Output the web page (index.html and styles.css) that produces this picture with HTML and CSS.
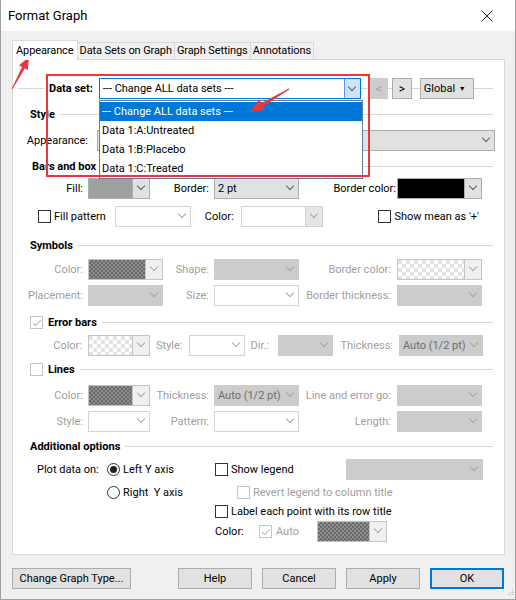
FILE: index.html
```html
<!DOCTYPE html>
<html lang="en">
  <head>
    <meta charset="UTF-8" />
    <title>Format Graph</title>
    <link rel="stylesheet" href="styles.css">
  </head>
  <body>
    <div class="titlebar">
      <span class="title">Format Graph</span>
      <svg class="close" width="12" height="12" viewBox="0 0 12 12"><path d="M0.5 0.5L11.5 11.5M11.5 0.5L0.5 11.5" stroke="#222" stroke-width="1" fill="none"/></svg>
    </div>

    <div class="tabs">
      <span class="tab active">Appearance</span>
      <span class="tab">Data Sets on Graph</span>
      <span class="tab">Graph Settings</span>
      <span class="tab">Annotations</span>
    </div>

    <div class="panel">
      <div class="row dataset">
        <b class="ds-label">Data set:</b>
        <div class="combo focus ds-combo"><span class="val">--- Change ALL data sets ---</span><i class="chev"></i></div>
        <span class="nav off">&lt;</span>
        <span class="nav next">&gt;</span>
        <span class="global">Global<span class="tri">&#9660;</span></span>
      </div>

      <div class="row head"><b>Style</b><i class="rule"></i></div>

      <div class="row">
        <span class="lbl app-lbl">Appearance:</span>
        <div class="combo app-combo"><span class="val app-val">Interleaved bars and box</span><i class="chev"></i></div>
      </div>

      <div class="row head bars-head"><b>Bars and box</b><i class="rule"></i></div>

      <div class="row fields">
        <span class="lbl c1">Fill:</span>
        <div class="c2"><div class="swatch sw62"><span class="fill gray"></span><i class="chev"></i></div></div>
        <span class="lbl c3">Border:</span>
        <div class="c4"><div class="combo"><span class="val">2 pt</span><i class="chev"></i></div></div>
        <span class="lbl c5 near">Border color:</span>
        <div class="c6"><div class="swatch"><span class="fill black"></span><i class="chev"></i></div></div>
      </div>

      <div class="row pattern">
        <span class="check"></span><span class="cap">Fill pattern</span>
        <div class="combo blank fp-combo"><span class="val"></span><i class="chev"></i></div>
        <span class="fp-color">Color:</span>
        <div class="swatch blank fp-swatch"><span class="fill"></span><i class="chev"></i></div>
        <span class="check push"></span><span class="cap">Show mean as '+'</span>
      </div>

      <div class="row head"><b>Symbols</b><i class="rule"></i></div>

      <div class="row fields dim">
        <span class="lbl c1">Color:</span>
        <div class="c2"><div class="swatch muted"><span class="fill dark-check"></span><i class="chev"></i></div></div>
        <span class="lbl c3">Shape:</span>
        <div class="c4"><div class="combo off"><span class="val"></span><i class="chev"></i></div></div>
        <span class="lbl c5">Border color:</span>
        <div class="c6"><div class="swatch muted"><span class="fill light-check"></span><i class="chev"></i></div></div>
      </div>

      <div class="row fields dim">
        <span class="lbl c1">Placement:</span>
        <div class="c2"><div class="combo off"><span class="val"></span><i class="chev"></i></div></div>
        <span class="lbl c3">Size:</span>
        <div class="c4"><div class="combo blank"><span class="val"></span><i class="chev"></i></div></div>
        <span class="lbl c5">Border thickness:</span>
        <div class="c6"><div class="combo off"><span class="val"></span><i class="chev"></i></div></div>
      </div>

      <div class="row head"><span class="check off on"></span><b>Error bars</b><i class="rule"></i></div>

      <div class="row err dim">
        <span class="lbl err-lbl">Color:</span>
        <div class="swatch muted sw62"><span class="fill light-check"></span><i class="chev"></i></div>
        <span>Style:</span>
        <div class="combo blank w56"><span class="val"></span><i class="chev"></i></div>
        <span>Dir.:</span>
        <div class="combo off w55 dir"><span class="val"></span><i class="chev"></i></div>
        <span class="push">Thickness:</span>
        <div class="combo off w84"><span class="val">Auto (1/2 pt)</span><i class="chev"></i></div>
      </div>

      <div class="row head"><span class="check off"></span><b>Lines</b><i class="rule"></i></div>

      <div class="row fields dim">
        <span class="lbl c1">Color:</span>
        <div class="c2"><div class="swatch muted sw62"><span class="fill dark-check"></span><i class="chev"></i></div></div>
        <span class="lbl c3">Thickness:</span>
        <div class="c4"><div class="combo off"><span class="val">Auto (1/2 pt)</span><i class="chev"></i></div></div>
        <span class="lbl c5">Line and error go:</span>
        <div class="c6"><div class="combo off"><span class="val"></span><i class="chev"></i></div></div>
      </div>

      <div class="row fields dim">
        <span class="lbl c1">Style:</span>
        <div class="c2"><div class="combo blank sw62"><span class="val"></span><i class="chev"></i></div></div>
        <span class="lbl c3">Pattern:</span>
        <div class="c4"><div class="combo blank"><span class="val"></span><i class="chev"></i></div></div>
        <span class="lbl c5">Length:</span>
        <div class="c6"><div class="combo off"><span class="val"></span><i class="chev"></i></div></div>
      </div>

      <div class="row head"><b>Additional options</b><i class="rule"></i></div>

      <div class="row opt">
        <span class="o1">Plot data on:</span>
        <span class="o2"><span class="radio on"></span><span class="cap">Left Y axis</span></span>
        <span class="o3"><span class="check"></span><span class="cap">Show legend</span><span class="combo off push w137"><span class="val"></span><i class="chev"></i></span></span>
      </div>

      <div class="row opt">
        <span class="o1"></span>
        <span class="o2"><span class="radio"></span><span class="cap">Right&nbsp; Y axis</span></span>
        <span class="o3 revert"><span class="check off"></span><span class="cap dim-text">Revert legend to column title</span></span>
      </div>

      <div class="row opt">
        <span class="o1"></span>
        <span class="o2"></span>
        <span class="o3"><span class="check"></span><span class="cap">Label each point with its row title</span></span>
      </div>

      <div class="row opt">
        <span class="o1"></span>
        <span class="o2"></span>
        <span class="o3">
          <span class="color-cap">Color:</span>
          <span class="check off on"></span><span class="cap auto-cap dim-text">Auto</span>
          <span class="swatch muted w70"><span class="fill dark-check"></span><i class="chev"></i></span>
        </span>
      </div>
    </div>

    <div class="buttons">
      <span class="btn change">Change Graph Type...</span>
      <span class="btn">Help</span>
      <span class="btn">Cancel</span>
      <span class="btn">Apply</span>
      <span class="btn default">OK</span>
    </div>

    <!-- open list of the data set combo -->
    <div class="list">
      <div class="item picked">--- Change ALL data sets ---</div>
      <div class="item">Data 1:A:Untreated</div>
      <div class="item">Data 1:B:Placebo</div>
      <div class="item">Data 1:C:Treated</div>
    </div>

    <div class="callout"></div>

    <svg class="marks" width="516" height="600" viewBox="0 0 516 600">
      <polygon fill="#e8383d" points="29,57 27.8,69.9 24.8,68.4 12.4,89.2 11.7,88.8 22,66.9 19,65.3"/>
      <polygon fill="#e8383d" points="250,112 265.1,110.1 263.1,106.6 289.3,89.4 288.8,88.6 261,103.2 259,99.7"/>
      <g fill="#b4b4b4">
        <rect x="512" y="590" width="1" height="1"/>
        <rect x="510" y="592" width="1" height="1"/>
        <rect x="512" y="592" width="1" height="1"/>
        <rect x="508" y="594" width="1" height="1"/>
        <rect x="510" y="594" width="1" height="1"/>
        <rect x="512" y="594" width="1" height="1"/>
      </g>
    </svg>
  </body>
</html>
```

FILE: styles.css
```css
* {
  box-sizing: border-box;
}
body {
  margin: 0;
  width: 516px;
  height: 600px;
  overflow: hidden;
  background: #f0f0f0;
  border: 1px solid #a0a0a0;
  border-top: none;
  font-family: Roboto, "Noto Sans", sans-serif;
  font-size: 11px;
  color: #000;
}
b {
  font-weight: bold;
}
i {
  font-style: normal;
}

/* title and tabs */
.titlebar {
  height: 31px;
  background: #fff;
  display: flex;
  align-items: center;
  padding-left: 7px;
}
.title {
  flex: 1;
  font-size: 13px;
}
.close {
  margin-right: 22px;
}
.tabs {
  display: flex;
  align-items: flex-end;
  height: 19px;
  margin-top: 9px;
  padding-left: 11px;
}
.tab {
  height: 17px;
  line-height: 15px;
  padding: 0 2px;
  border: 1px solid #d9d9d9;
  border-bottom: none;
  border-left: none;
  background: #f0f0f0;
  white-space: nowrap;
  letter-spacing: -0.1px;
}
.tab.active {
  position: relative;
  z-index: 1;
  height: 20px;
  line-height: 19px;
  margin-bottom: -1px;
  padding: 0 3px;
  background: #fff;
  border-left: 1px solid #d9d9d9;
}

/* tab page */
.panel {
  margin-left: 11px;
  width: 493px;
  height: 496px;
  padding-top: 17px;
  background: #fff;
  border: 1px solid #d9d9d9;
  display: grid;
  grid-template-rows: 23px 28px 24px 28px 16px 40px 18px 30px 22px 32px 14px 34px 18px 34px 16px 30px 16px 22px 18px;
  align-content: start;
}
.row {
  display: flex;
  align-items: center;
  white-space: nowrap;
}
.head {
  padding: 0 11px 0 17px;
  gap: 5px;
}
.bars-head {
  padding-left: 19px;
}
.rule {
  flex: 1;
  border-top: 1px solid #d7d7d7;
}
.dim {
  color: #a0a0a0;
}
.dim-text {
  color: #a0a0a0;
}
.push {
  margin-left: auto;
}

/* combo boxes */
.combo {
  display: flex;
  align-items: center;
  height: 21px;
  width: 100%;
  border: 1px solid #adadad;
  background: #e1e1e1;
  color: #000;
}
.combo .val {
  flex: 1;
  padding-left: 3px;
  overflow: hidden;
}
.chev {
  width: 16px;
  align-self: stretch;
  display: flex;
  align-items: center;
  justify-content: center;
}
.chev::after {
  content: "";
  width: 5px;
  height: 5px;
  border: solid #606060;
  border-width: 0 1px 1px 0;
  transform: translateY(-2px) rotate(45deg);
}
.combo.focus {
  border-color: #0078d7;
}
.combo.focus .chev {
  background: #cce4f7;
  border-left: 1px solid #569de5;
}
.combo.off {
  background: #cccccc;
  border-color: #cccccc;
  color: #6d6d6d;
}
.combo.off .chev::after {
  border-color: #a6a6a6;
}
.combo.blank {
  background: #fff;
  border-color: #d4d4d4;
}
.combo.blank .chev::after {
  border-color: #a8a8a8;
}

/* data set line */
.dataset {
  padding: 0 11px 0 5px;
  background: linear-gradient(#d7d7d7, #d7d7d7) no-repeat left center / 100% 1px;
  background-origin: content-box;
  background-clip: content-box;
}
.ds-label {
  margin-left: 26px;
  padding: 0 6px 0 5px;
  background: #fff;
}
.ds-combo {
  width: 262px;
  background: #fff;
}
.nav {
  width: 20px;
  height: 21px;
  margin-left: 4px;
  display: flex;
  align-items: center;
  justify-content: center;
  background: #e1e1e1;
  border: 1px solid #adadad;
  font-size: 12px;
}
.nav.off {
  width: 18px;
  margin-left: 9px;
  background: #cccccc;
  border-color: #cccccc;
  color: #a0a0a0;
}
.global {
  width: 54px;
  height: 21px;
  margin-left: 8px;
  display: flex;
  align-items: center;
  justify-content: space-between;
  padding: 0 7px 0 3px;
  background: #e1e1e1;
  border: 1px solid #adadad;
}
.tri {
  font-size: 7px;
}

.app-lbl {
  width: 80px;
}
.app-combo {
  width: 398px;
  margin-left: 4px;
}
.app-combo .app-val {
  flex: none;
  width: 257px;
  text-align: right;
}
.app-combo .chev {
  margin-left: auto;
}

/* colour pickers */
.swatch {
  display: flex;
  height: 21px;
  width: 100%;
  border: 1px solid #adadad;
  background: #e1e1e1;
}
.swatch .fill {
  flex: 1;
  border-right: 1px solid #adadad;
}
.swatch.muted {
  border-color: #c4c4c4;
  background: #f0f0f0;
}
.swatch.muted .fill {
  border-right-color: #c4c4c4;
}
.swatch.muted .chev::after {
  border-color: #a8a8a8;
}
.swatch.blank {
  border-color: #d4d4d4;
  background: #e5e5e5;
}
.swatch.blank .fill {
  background: #fff;
  border-right-color: #d4d4d4;
}
.swatch.blank .chev::after {
  border-color: #a8a8a8;
}
.fill.gray {
  background: #a0a0a0;
}
.fill.black {
  background: #000;
}
.fill.dark-check {
  background: repeating-conic-gradient(#6a6a6a 0 25%, #8c8c8c 0 50%) 0 0 / 4px 4px;
}
.fill.light-check {
  background: repeating-conic-gradient(#ffffff 0 25%, #e3e3e3 0 50%) 0 0 / 8px 8px;
}

/* field columns */
.lbl {
  display: flex;
  justify-content: flex-end;
  padding-right: 5px;
  flex: none;
}
.c1 { width: 75px; flex: none; }
.c2 { width: 75px; flex: none; }
.c3 { width: 51px; flex: none; }
.c4 { width: 85px; flex: none; }
.c5 { width: 98px; flex: none; padding-right: 6px; }
.c5.near { padding-right: 1px; }
.c6 { width: 85px; flex: none; }
.sw62 { width: 62px; }
.w56 { width: 56px; }
.w55 { width: 55px; }
.w84 { width: 84px; }
.w70 { width: 70px; }
.w137 { width: 137px; }

.pattern {
  padding: 0 25px;
}
.cap {
  margin-left: 3px;
}
.fp-combo {
  width: 76px;
  margin-left: 9px;
}
.fp-color {
  margin-left: 14px;
}
.fp-swatch {
  width: 82px;
  margin-left: 7px;
}

.err {
  gap: 6px;
  padding-right: 21px;
}
.err-lbl {
  width: 69px;
  padding-right: 0;
}
.err .dir {
  margin-left: 3px;
}

/* check boxes and radios */
.check {
  flex: none;
  width: 13px;
  height: 13px;
  border: 1px solid #333;
  background: #fff;
}
.check.off {
  border-color: #c4c4c4;
}
.check.on::after {
  content: "";
  display: block;
  width: 3px;
  height: 7px;
  border: solid #b4b4b4;
  border-width: 0 1px 1px 0;
  transform: translate(4px, 1px) rotate(45deg);
}
.radio {
  flex: none;
  width: 13px;
  height: 13px;
  border: 1px solid #333;
  border-radius: 50%;
  background: #fff;
  display: flex;
  align-items: center;
  justify-content: center;
}
.radio.on::after {
  content: "";
  width: 7px;
  height: 7px;
  border-radius: 50%;
  background: #222;
}

/* additional options */
.o1 {
  width: 94px;
  flex: none;
  padding-left: 24px;
}
.o2 {
  width: 108px;
  flex: none;
  display: flex;
  align-items: center;
}
.o3 {
  flex: 1;
  display: flex;
  align-items: center;
  padding-right: 21px;
}
.o3.revert {
  padding-left: 22px;
}
.color-cap {
  width: 44px;
}
.auto-cap {
  width: 41px;
  margin-left: 4px;
}

/* dialog buttons */
.buttons {
  display: flex;
  gap: 10px;
  padding: 13px 11px 0 11px;
}
.btn {
  width: 74px;
  height: 21px;
  display: flex;
  align-items: center;
  justify-content: center;
  background: #e1e1e1;
  border: 1px solid #adadad;
}
.btn.change {
  width: 119px;
  margin-right: auto;
}
.btn.default {
  border: 2px solid #0078d7;
}

/* overlays */
.list {
  position: absolute;
  left: 99px;
  top: 100px;
  width: 264px;
  padding-top: 1px;
  background: #fff;
  border: 1px solid #647a9c;
}
.item {
  height: 19px;
  line-height: 19px;
  padding-left: 2px;
}
.item.picked {
  background: #0078d7;
  color: #fff;
}
.callout {
  position: absolute;
  left: 46px;
  top: 74px;
  width: 324px;
  height: 103px;
  border: 2px solid #e8383d;
}
.marks {
  position: absolute;
  left: 0;
  top: 0;
  pointer-events: none;
}
```
